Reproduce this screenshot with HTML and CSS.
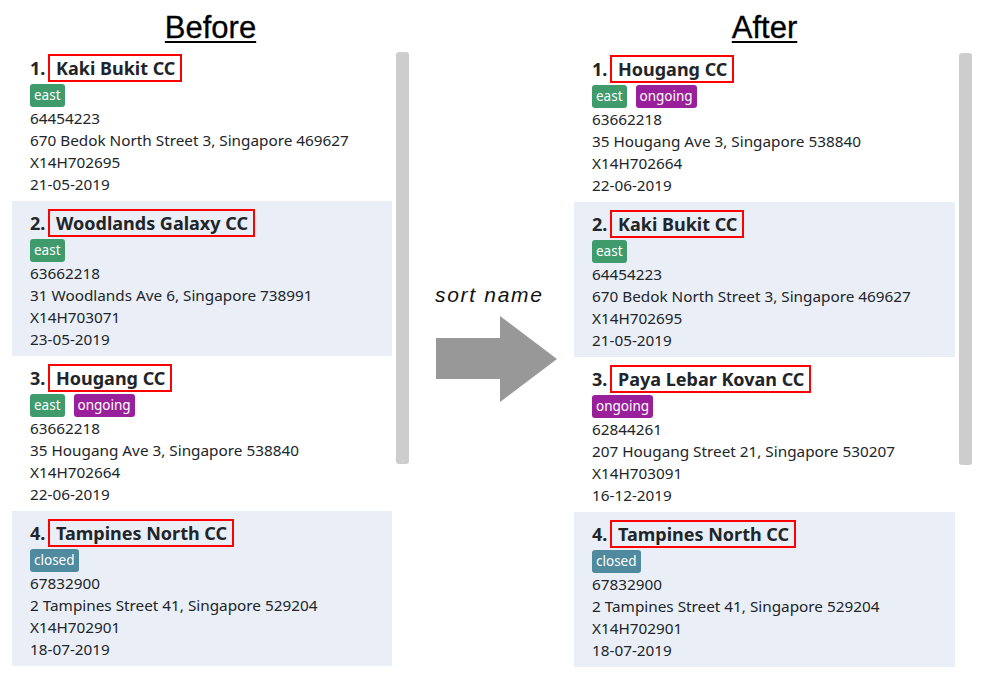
FILE: index.html
```html
<!DOCTYPE html>
<html>
<head>
<meta charset="utf-8">
<link rel="stylesheet" href="styles.css">
</head>
<body>
<div class="page">
  <section class="panel panel-before">
    <h1 class="heading heading-before">Before</h1>
    <div class="panel-body">
      <ul class="list">
        <li class="card">
          <div class="title"><span class="num">1.</span><span class="name">Kaki Bukit CC</span></div>
          <div class="tags"><span class="tag tag-east">east</span></div>
          <div class="line">64454223</div>
          <div class="line">670 Bedok North Street 3, Singapore 469627</div>
          <div class="line">X14H702695</div>
          <div class="line">21-05-2019</div>
        </li>
        <li class="card card-alt">
          <div class="title"><span class="num">2.</span><span class="name">Woodlands Galaxy CC</span></div>
          <div class="tags"><span class="tag tag-east">east</span></div>
          <div class="line">63662218</div>
          <div class="line">31 Woodlands Ave 6, Singapore 738991</div>
          <div class="line">X14H703071</div>
          <div class="line">23-05-2019</div>
        </li>
        <li class="card">
          <div class="title"><span class="num">3.</span><span class="name">Hougang CC</span></div>
          <div class="tags"><span class="tag tag-east">east</span><span class="tag tag-ongoing">ongoing</span></div>
          <div class="line">63662218</div>
          <div class="line">35 Hougang Ave 3, Singapore 538840</div>
          <div class="line">X14H702664</div>
          <div class="line">22-06-2019</div>
        </li>
        <li class="card card-alt">
          <div class="title"><span class="num">4.</span><span class="name">Tampines North CC</span></div>
          <div class="tags"><span class="tag tag-closed">closed</span></div>
          <div class="line">67832900</div>
          <div class="line">2 Tampines Street 41, Singapore 529204</div>
          <div class="line">X14H702901</div>
          <div class="line">18-07-2019</div>
        </li>
      </ul>
      <div class="scrollbar"></div>
    </div>
  </section>

  <section class="middle">
    <div class="cmd">sort name</div>
    <svg class="arrow" width="122" height="88" viewBox="0 0 122 88">
      <polygon points="0,22 64,22 64,0 121,43 64,86 64,63 0,63" fill="#989898"/>
    </svg>
  </section>

  <section class="panel panel-after">
    <h1 class="heading heading-after">After</h1>
    <div class="panel-body panel-body-after">
      <ul class="list list-after">
        <li class="card">
          <div class="title"><span class="num">1.</span><span class="name">Hougang CC</span></div>
          <div class="tags"><span class="tag tag-east">east</span><span class="tag tag-ongoing">ongoing</span></div>
          <div class="line">63662218</div>
          <div class="line">35 Hougang Ave 3, Singapore 538840</div>
          <div class="line">X14H702664</div>
          <div class="line">22-06-2019</div>
        </li>
        <li class="card card-alt">
          <div class="title"><span class="num">2.</span><span class="name">Kaki Bukit CC</span></div>
          <div class="tags"><span class="tag tag-east">east</span></div>
          <div class="line">64454223</div>
          <div class="line">670 Bedok North Street 3, Singapore 469627</div>
          <div class="line">X14H702695</div>
          <div class="line">21-05-2019</div>
        </li>
        <li class="card">
          <div class="title"><span class="num">3.</span><span class="name">Paya Lebar Kovan CC</span></div>
          <div class="tags"><span class="tag tag-ongoing">ongoing</span></div>
          <div class="line">62844261</div>
          <div class="line">207 Hougang Street 21, Singapore 530207</div>
          <div class="line">X14H703091</div>
          <div class="line">16-12-2019</div>
        </li>
        <li class="card card-alt">
          <div class="title"><span class="num">4.</span><span class="name">Tampines North CC</span></div>
          <div class="tags"><span class="tag tag-closed">closed</span></div>
          <div class="line">67832900</div>
          <div class="line">2 Tampines Street 41, Singapore 529204</div>
          <div class="line">X14H702901</div>
          <div class="line">18-07-2019</div>
        </li>
      </ul>
      <div class="scrollbar"></div>
    </div>
  </section>
</div>
</body>
</html>
```

FILE: styles.css
```css
html, body {
  margin: 0;
  padding: 0;
  background: #ffffff;
}

.page {
  display: flex;
  width: 981px;
  height: 674px;
  overflow: hidden;
}

.panel {
  display: flex;
  flex-direction: column;
}

.panel-before {
  margin-left: 12px;
  width: 397px;
}

.panel-after {
  width: 398px;
}

.heading {
  margin: 0;
  height: 46px;
  box-sizing: border-box;
  padding-top: 11px;
  font-family: "Liberation Sans", Arial, sans-serif;
  font-weight: normal;
  font-size: 31px;
  line-height: 34px;
  color: #000;
  text-align: center;
  text-decoration: underline;
  text-decoration-thickness: 2px;
  text-underline-offset: 3px;
  -webkit-text-stroke: 0.3px #000;
}

.heading-before {
  padding-right: 0;
}

.heading-after {
  padding-right: 17px;
}

.panel-body {
  display: flex;
  gap: 4px;
  align-items: flex-start;
}

.panel-body-after {
  margin-top: 1px;
}

.list {
  list-style: none;
  margin: 0;
  padding: 0;
  width: 380px;
  flex: none;
}

.list-after {
  width: 381px;
}

.card {
  height: 155px;
  box-sizing: border-box;
  padding: 8px 0 0 18px;
  font-family: "Noto Sans", "Open Sans", sans-serif;
  color: #212529;
}

.card-alt {
  background: #e9eef7;
}

.title {
  display: flex;
  align-items: center;
  height: 28px;
  font-size: 18px;
  font-weight: bold;
}

.num {
  width: 18px;
  line-height: 24px;
}

.name {
  border: 2px solid #ff0000;
  padding: 0 5px 0 6px;
  line-height: 24px;
  white-space: nowrap;
}

.tags {
  display: flex;
  gap: 9px;
  margin-top: 2px;
  height: 23px;
}

.tag {
  display: block;
  height: 23px;
  box-sizing: border-box;
  padding: 2px 4px 0 4px;
  border-radius: 3px;
  font-size: 13.5px;
  line-height: 19px;
  color: #ffffff;
}

.tag-east {
  background: #3f9a6c;
}

.tag-ongoing {
  background: #9a1f9a;
}

.tag-closed {
  background: #4f8a9e;
}

.line {
  font-size: 15.3px;
  line-height: 22px;
  height: 22px;
  white-space: nowrap;
}

.scrollbar {
  flex: none;
  width: 13px;
  height: 412px;
  margin-top: 6px;
  background: #cdcdcd;
  border-radius: 3px;
}

.middle {
  width: 165px;
  flex: none;
  display: flex;
  flex-direction: column;
  align-items: flex-start;
  padding-top: 281px;
  box-sizing: border-box;
  padding-left: 26px;
}

.cmd {
  font-family: "Liberation Sans", Arial, sans-serif;
  font-style: italic;
  font-size: 21px;
  letter-spacing: 1.7px;
  line-height: 28px;
  color: #111;
}

.arrow {
  display: block;
  margin-top: 7px;
  margin-left: 1px;
}
```
